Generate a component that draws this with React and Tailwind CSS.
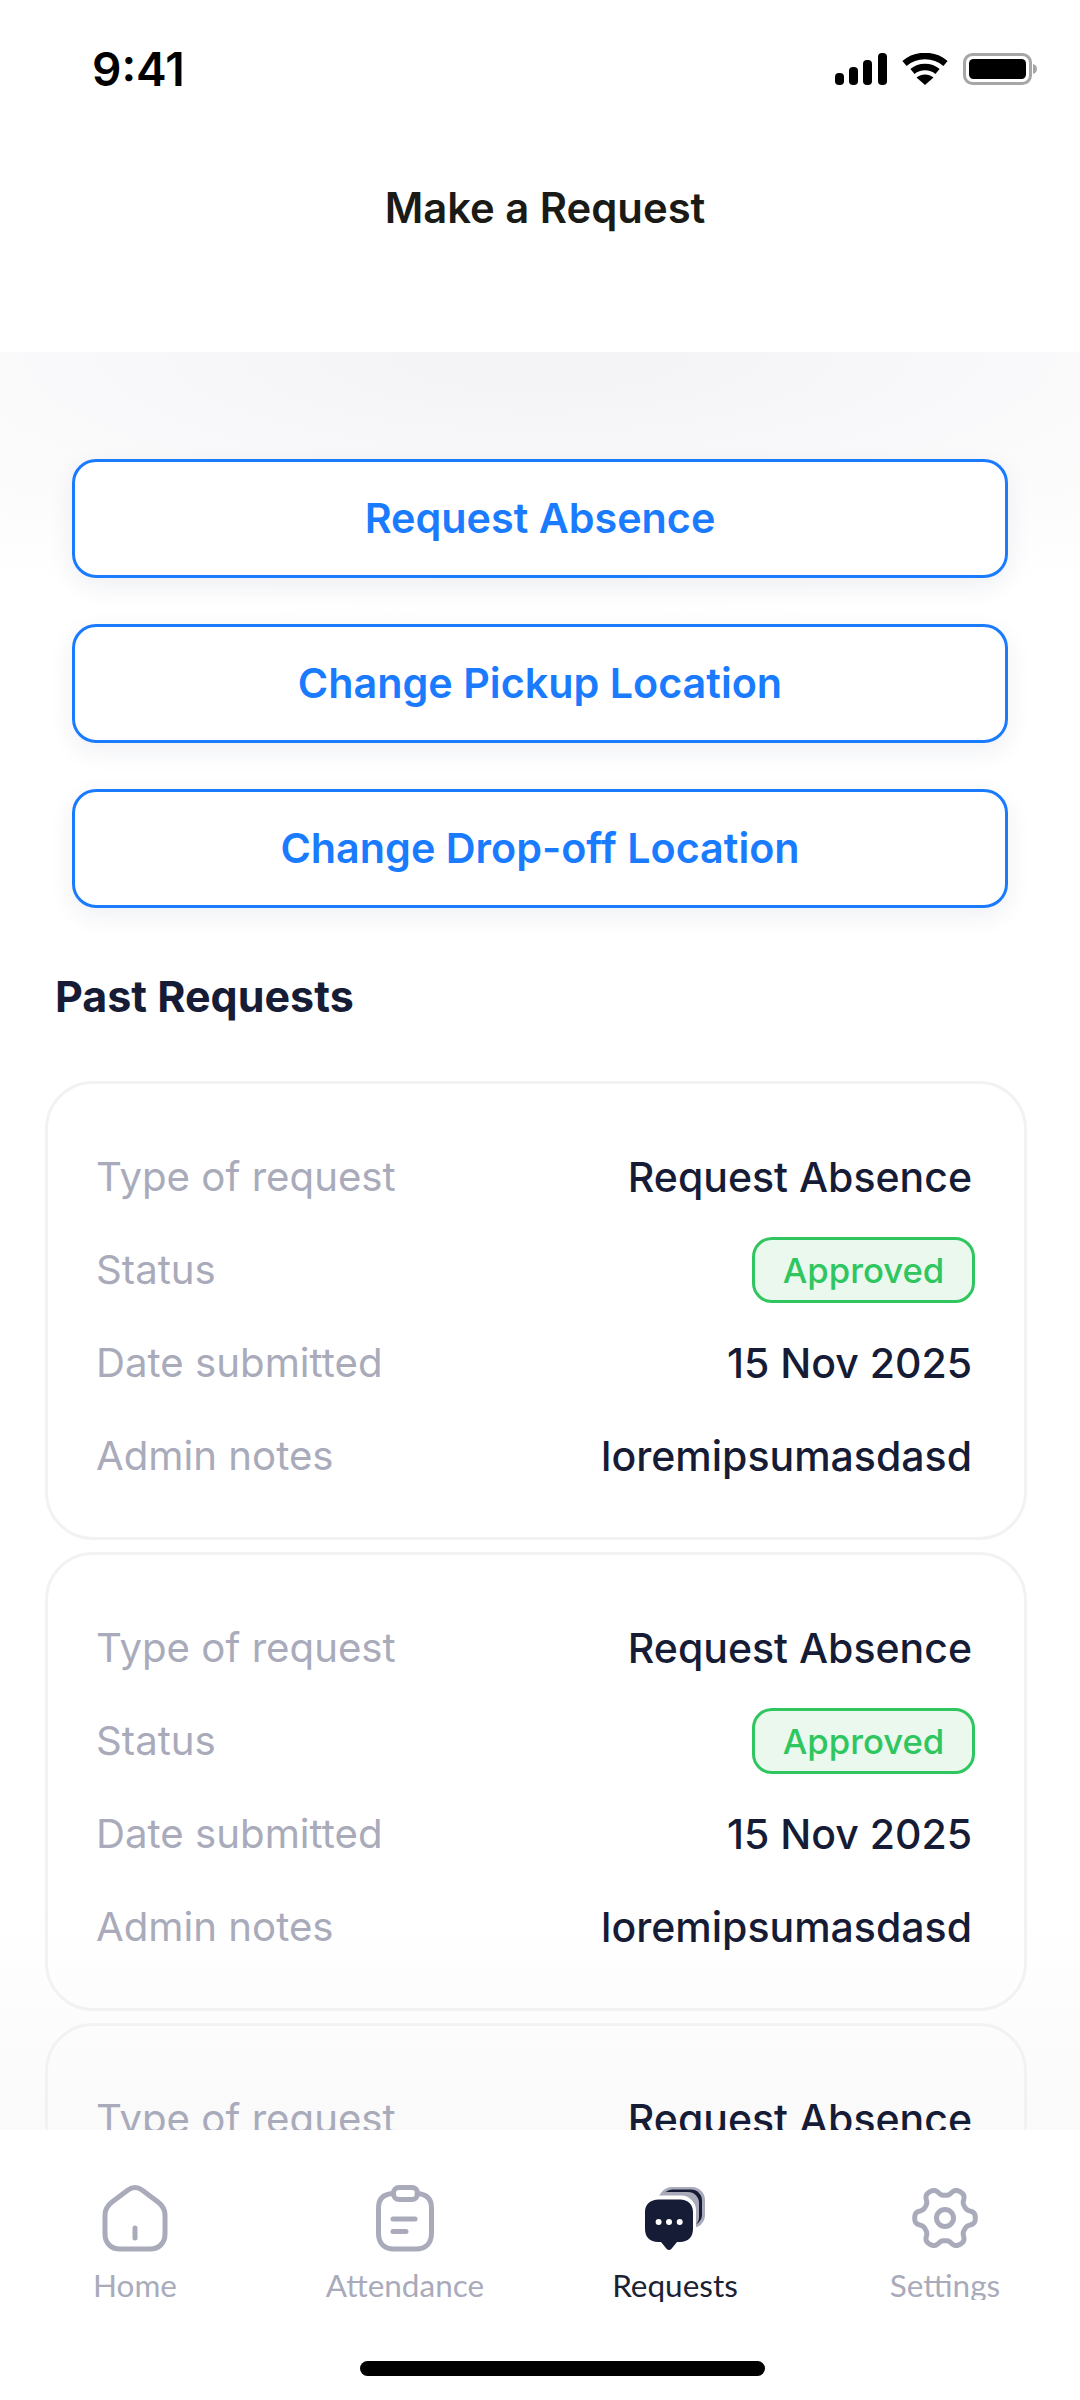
const INTER = "font-['Inter',sans-serif]";

function gearPath() {
  const pts = [];
  const n = 240;
  for (let i = 0; i < n; i++) {
    const t = (i / n) * Math.PI * 2;
    const w = Math.tanh(1.6 * Math.cos(6 * t)) / Math.tanh(1.6);
    const r = 26.5 + 3.8 * w;
    pts.push(`${(36 + r * Math.cos(t)).toFixed(2)} ${(36 + r * Math.sin(t)).toFixed(2)}`);
  }
  return "M" + pts.join("L") + "Z";
}

const HomeIcon = () => (
  <svg width="72" height="72" viewBox="0 0 72 72" fill="none" stroke="#a9abbb" strokeWidth="5" strokeLinecap="round" strokeLinejoin="round">
    <path d="M36 5.500C33 5.500 31 6.500 29 8L13 20C8.500 23.500 6 27 6 33V52C6 61 12 67 21 67H51C60 67 66 61 66 52V33C66 27 63.500 23.500 59 20L43 8C41 6.500 39 5.500 36 5.500Z" />
    <path d="M36 46V56" />
  </svg>
);

const AttendanceIcon = () => (
  <svg width="72" height="72" viewBox="0 0 72 72" fill="none" stroke="#a9abbb" strokeWidth="5" strokeLinecap="round" strokeLinejoin="round">
    <path d="M24 11.500C14 12 9.500 17 9.500 26V51C9.500 61 15 67 25 67H47C57 67 62.500 61 62.500 51V26C62.500 17 58 12 48 11.500" />
    <rect x="24.500" y="5.500" width="24" height="12" rx="5.500" />
    <path d="M24 37H46" />
    <path d="M24 49.500H37" />
  </svg>
);

const RequestsIcon = () => (
  <svg width="72" height="72" viewBox="0 0 72 72">
    <rect x="20" y="5" width="46" height="41" rx="13" fill="#a9abbb" />
    <rect x="23" y="7.500" width="40" height="36" rx="11" fill="#161b36" />
    <rect x="17" y="10" width="43" height="36" rx="11" fill="#a9abbb" />
    <rect x="2" y="13.500" width="55" height="58" rx="15" fill="#ffffff" />
    <path d="M20 17.500H41C49 17.500 54 22.500 54 30V47C54 55 49 60 41 60H38L32.500 66.800C31 68.400 29 68.400 27.500 66.800L22 60H19C11 60 6 55 6 47V30C6 22.500 11 17.500 20 17.500Z" fill="#161b36" />
    <circle cx="19.600" cy="40" r="3" fill="#ffffff" />
    <circle cx="30" cy="40" r="3" fill="#ffffff" />
    <circle cx="40.700" cy="40" r="3" fill="#ffffff" />
  </svg>
);

const SettingsIcon = () => (
  <svg width="72" height="72" viewBox="0 0 72 72" fill="none" stroke="#a9abbb" strokeWidth="5" strokeLinejoin="round">
    <path d={gearPath()} />
    <circle cx="36" cy="36" r="8.500" />
  </svg>
);

const SignalIcon = () => (
  <svg width="52" height="32" viewBox="0 0 52 32" fill="#000000">
    <rect x="0" y="20" width="9" height="12" rx="4" />
    <rect x="14" y="14" width="9" height="18" rx="4" />
    <rect x="28" y="7" width="9" height="25" rx="4" />
    <rect x="43" y="0" width="9" height="32" rx="4" />
  </svg>
);

const WifiIcon = () => (
  <svg width="46" height="32" viewBox="0 0 46 32" fill="none" stroke="#000000" strokeWidth="6.500">
    <path d="M2.500 10.500C14 0.500 32 0.500 43.500 10.500" />
    <path d="M10.500 18.500C17.500 12.500 28.500 12.500 35.500 18.500" />
    <path d="M23 32L14.500 24.500C19.500 20.500 26.500 20.500 31.500 24.500Z" fill="#000000" stroke="none" />
  </svg>
);

const BatteryIcon = () => (
  <svg width="74" height="32" viewBox="0 0 74 32">
    <rect x="1.500" y="1.500" width="66" height="29" rx="8" fill="none" stroke="#a6a6a6" strokeWidth="3" />
    <rect x="6" y="6" width="57" height="20" rx="4.500" fill="#000000" />
    <path d="M70 11C72.500 11.500 74 13.500 74 16C74 18.500 72.500 20.500 70 21Z" fill="#a6a6a6" />
  </svg>
);

const StatusBar = () => (
  <div className="flex h-[136px] items-start justify-between pl-[92px] pr-[43px] pt-[47px]">
    <span className={`${INTER} text-[46px] leading-[44px] font-semibold text-black`}>9:41</span>
    <div className="mt-[6px] flex items-start gap-[15px]">
      <SignalIcon />
      <WifiIcon />
      <BatteryIcon />
    </div>
  </div>
);

const ActionButton = ({ label }) => (
  <div className="flex h-[119px] items-center justify-center rounded-[24px] border-[3px] border-[#1a7bff] bg-white pt-[1px] shadow-[0_8px_26px_rgba(30,40,80,0.07)]">
    <span className={`${INTER} text-[41.3px] font-semibold text-[#1a7bff]`}>{label}</span>
  </div>
);

const Row = ({ label, children }) => (
  <div className="flex h-[93px] items-center justify-between">
    <span className={`${INTER} text-[40.2px] text-[#a9abbb]`}>{label}</span>
    {children}
  </div>
);

const Value = ({ children }) => (
  <span className={`${INTER} text-[41px] font-medium text-[#161b36]`}>{children}</span>
);

const Card = ({ partial }) => (
  <div className="h-[459px] shrink-0 rounded-[48px] border-[3px] border-[#f2f2f5] pl-[48px] pr-[52px] pt-[47px]">
    <Row label="Type of request"><Value>Request Absence</Value></Row>
    {!partial && (
      <>
        <Row label="Status">
          <span className={`${INTER} -mr-[3px] -mt-[1px] flex h-[66px] w-[223px] items-center justify-center rounded-[20px] border-[3px] border-[#2fc65f] bg-[#ebf8ee] text-[34.7px] font-medium text-[#2fc65f]`}>Approved</span>
        </Row>
        <Row label="Date submitted"><Value>15 Nov 2025</Value></Row>
        <Row label="Admin notes"><Value>loremipsumasdasd</Value></Row>
      </>
    )}
  </div>
);

const NavItem = ({ icon, label, active, clip }) => (
  <div className="flex w-[270px] flex-col items-center">
    {icon}
    <span className={`font-['Lato',sans-serif] mt-[9px] text-[31.5px] leading-[44px] ${clip ? "h-[37px] overflow-hidden" : ""} ${active ? "text-[#1c2233]" : "text-[#a9abbb]"}`}>{label}</span>
  </div>
);

export default function App() {
  return (
    <div className="flex h-[2400px] w-[1080px] flex-col overflow-hidden bg-white">
      <header className="h-[352px] shrink-0 bg-white">
        <StatusBar />
        <h1 className={`${INTER} translate-x-[5px] pt-[48px] text-center text-[41.8px] leading-[48px] font-semibold text-[#1a1a16]`}>Make a Request</h1>
      </header>
      <main className="relative min-h-0 flex-1 overflow-hidden bg-[radial-gradient(ellipse_1000px_270px_at_50%_0%,#f3f3f6,#ffffff)]">
        <div className="pointer-events-none absolute inset-x-0 bottom-0 h-[220px] bg-gradient-to-b from-transparent to-[#fafafb]" />
        <div className="relative">
          <div className="flex flex-col gap-[46px] px-[72px] pt-[107px]">
            <ActionButton label="Request Absence" />
            <ActionButton label="Change Pickup Location" />
            <ActionButton label="Change Drop-off Location" />
          </div>
          <h2 className={`${INTER} mt-[62px] pl-[55px] text-[43px] leading-[52px] font-bold text-[#161b36]`}>Past Requests</h2>
          <div className="mt-[59px] flex flex-col gap-[12px] pl-[45px] pr-[53px]">
            <Card />
            <Card />
            <Card partial />
          </div>
        </div>
      </main>
      <nav className="h-[270px] shrink-0 bg-white">
        <div className="flex justify-center pt-[52px]">
          <NavItem icon={<HomeIcon />} label="Home" />
          <NavItem icon={<AttendanceIcon />} label="Attendance" />
          <NavItem icon={<RequestsIcon />} label="Requests" active />
          <NavItem icon={<SettingsIcon />} label="Settings" clip />
        </div>
        <div className="ml-[360px] mt-[54px] h-[15px] w-[405px] rounded-full bg-black" />
      </nav>
    </div>
  );
}
